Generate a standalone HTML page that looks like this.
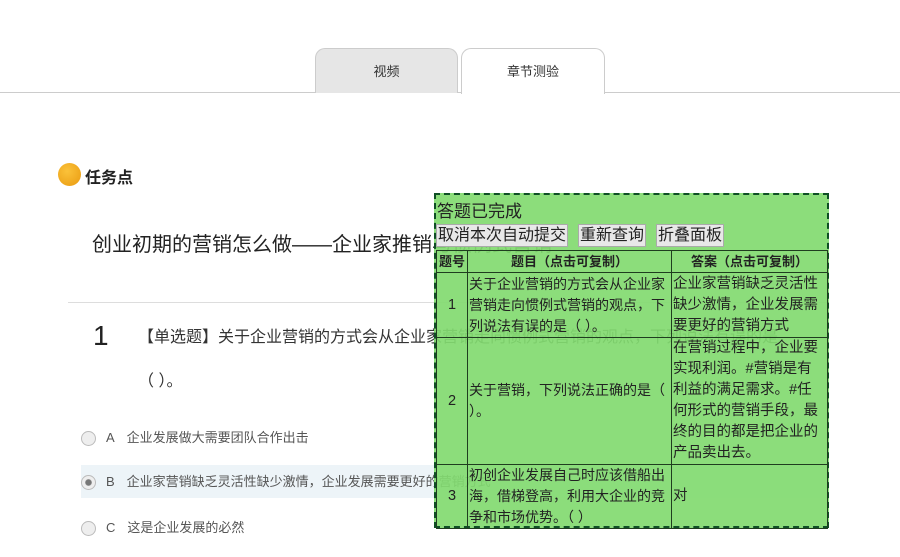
<!DOCTYPE html>
<html><head><meta charset="utf-8"><style>
body{margin:0;width:900px;height:557px;background:#fff;position:relative;overflow:hidden;font-family:"Liberation Sans","Noto Sans CJK SC",sans-serif;color:#333}
.line{position:absolute;left:0;top:92px;width:900px;height:1px;background:#ccc}
.tab{position:absolute;top:48px;height:44px;border:1px solid #ccc;border-bottom:none;border-radius:10px 10px 0 0;text-align:center;line-height:46px;font-size:13px}
.t1{left:315px;width:141px;background:#e6e6e6}
.t2{left:461px;width:142px;background:#fff;height:45px}
.dot{position:absolute;left:58px;top:163px;width:23px;height:23px;border-radius:50%;background:radial-gradient(circle at 40% 35%,#fbc23a,#e99a10)}
.tp{position:absolute;left:85px;top:164px;font-size:16px;font-weight:bold;color:#222}
.h{position:absolute;left:92px;top:228px;font-size:20px;color:#222;white-space:nowrap}
.hr{position:absolute;left:68px;top:302px;width:760px;height:1px;background:#ddd}
.num{position:absolute;left:93px;top:320px;font-size:28px;color:#222}
.q{position:absolute;left:138px;top:323px;font-size:16px;color:#333;white-space:nowrap}
.q2{position:absolute;left:138px;top:367px;font-size:16px;color:#333}
.opt{position:absolute;left:81px;height:33px;line-height:33px;font-size:13px;color:#555;white-space:nowrap}
.opt i{display:inline-block;width:13px;height:13px;border-radius:50%;border:1px solid #bbb;background:#eee;vertical-align:middle;margin:0 10px 0 0;position:relative}
.opt b{font-weight:normal;margin-right:12px}
.panel{position:absolute;left:434px;top:193px;width:391px;height:331px;border:2px dashed #0f4f25;background:rgba(130,218,112,0.92);font-size:14px;color:#222}
.ttl{font-size:17px;margin:6px 0 0 1px;line-height:21px}
.btn{display:inline-block;background:#e8e8e8;border:1px solid #aaa;font-size:16px;padding:0 1px;line-height:21px;margin-right:10px}
table{border-collapse:collapse;position:absolute;left:0;top:55px;width:392px;table-layout:fixed}
td,th{border:1px solid #1f3d1f;padding:0 1px;line-height:21px;vertical-align:middle;font-size:14.5px}
td.c2{font-size:14px}
th{font-size:13px;height:21px}
</style></head><body>
<div class="line"></div>
<div class="tab t1">视频</div>
<div class="tab t2">章节测验</div>
<div class="dot"></div><div class="tp">任务点</div>
<div class="h">创业初期的营销怎么做——企业家推销与惯例式营销</div>
<div class="hr"></div>
<div class="num">1</div>
<div class="q">【单选题】关于企业营销的方式会从企业家营销走向惯例式营销的观点，下列说法有误的是</div>
<div class="q2">（ ）。</div>
<div class="opt" style="top:421px"><i></i><b>A</b>企业发展做大需要团队合作出击</div>
<div class="opt" style="top:465px;width:739px;background:#edf4f8"><i style="background:radial-gradient(circle,#777 30%,#eee 40%)"></i><b>B</b>企业家营销缺乏灵活性缺少激情，企业发展需要更好的营销方式</div>
<div class="opt" style="top:511px"><i></i><b>C</b>这是企业发展的必然</div>
<div class="panel">
<div class="ttl">答题已完成</div>
<div style="margin-top:2px"><span class="btn">取消本次自动提交</span><span class="btn">重新查询</span><span class="btn">折叠面板</span></div>
<table>
<colgroup><col style="width:31px"><col style="width:204px"><col></colgroup>
<tr><th>题号</th><th>题目（点击可复制）</th><th>答案（点击可复制）</th></tr>
<tr style="height:65px"><td style="text-align:center">1</td><td class="c2">关于企业营销的方式会从企业家营销走向惯例式营销的观点，下列说法有误的是（ ）。</td><td>企业家营销缺乏灵活性缺少激情，企业发展需要更好的营销方式</td></tr>
<tr style="height:125px"><td style="text-align:center">2</td><td class="c2">关于营销，下列说法正确的是（ ）。</td><td>在营销过程中，企业要实现利润。#营销是有利益的满足需求。#任何形式的营销手段，最终的目的都是把企业的产品卖出去。</td></tr>
<tr style="height:64px"><td style="text-align:center">3</td><td class="c2">初创企业发展自己时应该借船出海，借梯登高，利用大企业的竞争和市场优势。（ ）</td><td>对</td></tr>
</table>
</div>
</body></html>
